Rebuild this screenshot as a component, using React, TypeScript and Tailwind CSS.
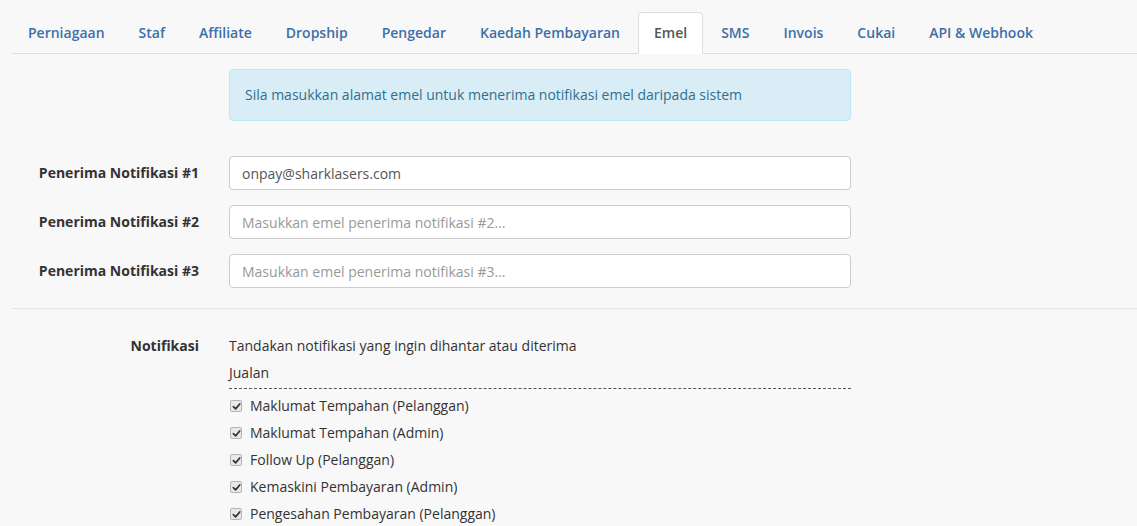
import React from "react"

const tabs = ['Perniagaan', 'Staf', 'Affiliate', 'Dropship', 'Pengedar', 'Kaedah Pembayaran', 'Emel', 'SMS', 'Invois', 'Cukai', 'API & Webhook']

const recipients = [
    { label: 'Penerima Notifikasi #1', value: 'onpay@sharklasers.com', placeholder: '' },
    { label: 'Penerima Notifikasi #2', value: '', placeholder: 'Masukkan emel penerima notifikasi #2...' },
    { label: 'Penerima Notifikasi #3', value: '', placeholder: 'Masukkan emel penerima notifikasi #3...' },
]

const checks = [
    'Maklumat Tempahan (Pelanggan)',
    'Maklumat Tempahan (Admin)',
    'Follow Up (Pelanggan)',
    'Kemaskini Pembayaran (Admin)',
    'Pengesahan Pembayaran (Pelanggan)',
]

const CheckBox: React.FC = () => (
    <span className="w-[12px] h-[12px] rounded-[2px] border border-[#b5b5b5] bg-[#e8e8e8] flex items-center justify-center shrink-0">
        <svg width="9" height="9" viewBox="0 0 10 10">
            <path d="M1.5 5.2 L4 7.6 L8.6 2.2" fill="none" stroke="#333" strokeWidth="1.9" strokeLinecap="round" strokeLinejoin="round" />
        </svg>
    </span>
)

export default function App() {
    return (
        <div className="w-[1137px] h-[526px] overflow-hidden bg-[#f8f8f8] text-[14px] leading-[20px] text-[#333]" style={{ fontFamily: '"Open Sans", "Liberation Sans", sans-serif' }}>
            <div className="pl-[12px] pt-[12px]">
                {/* tabs */}
                <div className="flex border-b border-[#ddd]">
                    {tabs.map(t => (
                        <div key={t} className={t === 'Emel'
                            ? 'mr-[2px] -mb-px px-[15px] pt-[10px] pb-[9px] bg-white border border-[#ddd] border-b-white rounded-t-[4px] text-[#555] font-semibold'
                            : 'mr-[2px] px-[15px] pt-[10px] pb-[9px] border border-transparent text-[#3d6fa9] font-semibold'}>
                            {t}
                        </div>
                    ))}
                </div>

                {/* alert */}
                <div className="flex mt-[15px]">
                    <div className="w-[202px]" />
                    <div className="w-[652px] px-[15px]">
                        <div className="bg-[#d9edf7] border border-[#bce8f1] rounded-[4px] px-[15px] py-[15px] text-[#31708f]">
                            Sila masukkan alamat emel untuk menerima notifikasi emel daripada sistem
                        </div>
                    </div>
                </div>

                {/* recipients */}
                <div className="mt-[35px] flex flex-col gap-[15px]">
                    {recipients.map(r => (
                        <div key={r.label} className="flex">
                            <label className="w-[202px] pr-[15px] pt-[7px] text-right font-bold">{r.label}</label>
                            <div className="w-[652px] px-[15px]">
                                <input
                                    type="text"
                                    defaultValue={r.value}
                                    placeholder={r.placeholder}
                                    className="w-full h-[34px] px-[12px] bg-white border border-[#ccc] rounded-[4px] text-[#555] placeholder:text-[#999] outline-none"
                                />
                            </div>
                        </div>
                    ))}
                </div>

                <div className="mt-[20px] border-t border-[#e3e3e3]" />

                {/* notifications */}
                <div className="flex mt-[27px]">
                    <label className="w-[202px] pr-[15px] text-right font-bold">Notifikasi</label>
                    <div className="w-[652px] px-[15px]">
                        <div>Tandakan notifikasi yang ingin dihantar atau diterima</div>
                        <div className="mt-[7px] pb-[5px] border-b border-dashed border-[#555]">Jualan</div>
                        <div className="mt-[7px] flex flex-col gap-[7px]">
                            {checks.map(c => (
                                <div key={c} className="flex items-center gap-[8px] pl-[1px]">
                                    <CheckBox />
                                    <span>{c}</span>
                                </div>
                            ))}
                        </div>
                    </div>
                </div>
            </div>
        </div>
    )
}
